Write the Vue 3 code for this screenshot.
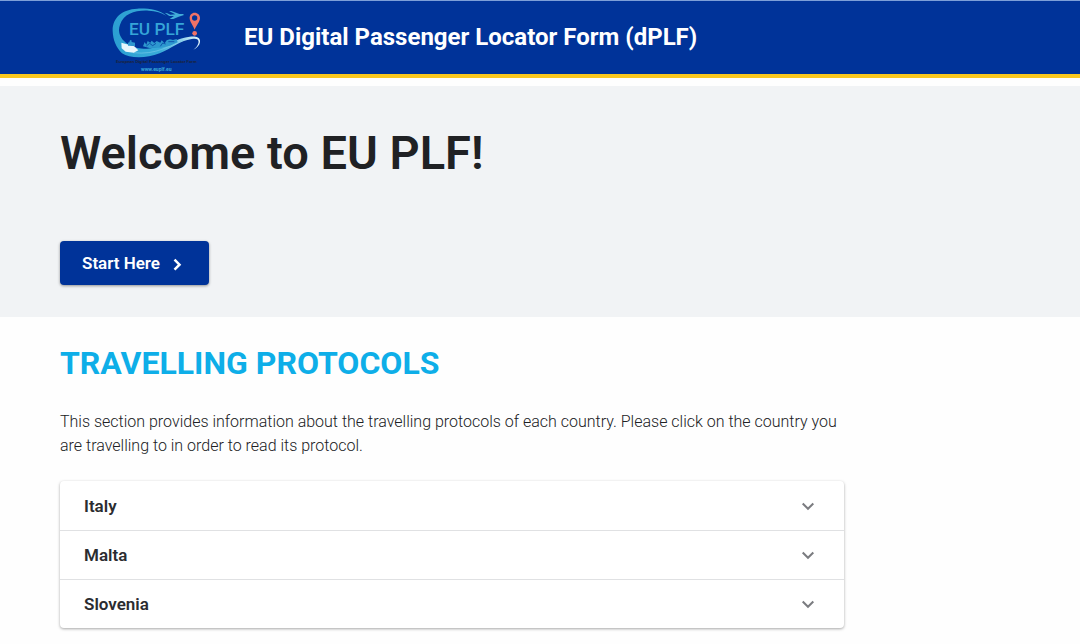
<template>
  <div class="page">
    <header class="header">
      <a href="#" class="logo" aria-label="EU PLF home">
        <svg viewBox="0 0 300 222" width="100" height="74" aria-hidden="true">
          <defs>
            <linearGradient id="swoosh" x1="0" y1="0" x2="1" y2="0">
              <stop offset="0" stop-color="#2b9fd2" />
              <stop offset="0.55" stop-color="#39abd9" />
              <stop offset="1" stop-color="#e4f6fc" />
            </linearGradient>
          </defs>
          <!-- swoosh -->
          <path
            fill="url(#swoosh)"
            d="M198 47C180 29 145 25 112 26C65 28 37 54 38 93C39 120 48 142 66 160C89 175 137 176 179 160C216 145 238 122 275 117C291 114 298 118 295 130C293 137 288 144 280 149C293 142 301 133 300 122C299 111 286 108 269 110C233 114 211 131 176 140C139 149 104 149 84 133C60 117 52 96 60 74C72 40 106 30 146 32C168 33 185 38 198 47Z"
          />
          <path fill="none" stroke="#77c9e8" stroke-width="2" d="M99 158C170 166 208 136 250 121" />
          <path fill="#e7f6fc" d="M64 128L103 139L115 151L101 158L77 155L65 145Z" />
          <!-- skyline -->
          <path
            fill="#2d98cf"
            d="M84 137V128L88 127L90 121L94 120L95 126L105 128V138ZM129 139L134 126L139 134L143 123L151 128L155 122L163 129L170 123L181 128L185 121L194 130L200 121L210 118L219 120L230 117L233 127L210 137L184 143L148 144Z"
          />
          <path stroke="#003399" stroke-width="2" fill="none" d="M139 138L149 130L158 137L168 130M181 139L188 129L197 132M205 125H223" />
          <!-- plane -->
          <path
            fill="#42add9"
            d="M194 38L202 40L211 44L226 43L207 33L214 33L238 42L249 42L252 45L236 50L220 57L209 57L222 48L208 48Z"
          />
          <text class="logo-name" x="87" y="106">EU PLF</text>
          <!-- pin -->
          <path
            fill="#ef7267"
            fill-rule="evenodd"
            d="M284 38C275 38 269 45 269 54C269 66 279 75 284 89C289 75 300 66 300 54C300 45 293 38 284 38ZM284 46A8 8 0 1 1 284 62A8 8 0 1 1 284 46Z"
          />
          <circle cx="284" cy="100" r="7" fill="#ef7267" />
          <text class="logo-caption" x="48" y="190">European Digital Passenger Locator Form</text>
          <text class="logo-url" x="123" y="214">www.euplf.eu</text>
        </svg>
      </a>
      <span class="header-title">EU Digital Passenger Locator Form (dPLF)</span>
    </header>

    <section class="hero">
      <h1 class="hero-title">Welcome to EU PLF!</h1>
      <button type="button" class="start-btn">
        <span>Start Here</span>
        <svg viewBox="0 0 24 24" width="20" height="20" aria-hidden="true">
          <path d="M9 8l6 6-6 6" fill="none" stroke="currentColor" stroke-width="3" />
        </svg>
      </button>
    </section>

    <main class="protocols">
      <h2 class="protocols-title">TRAVELLING PROTOCOLS</h2>
      <p class="protocols-text">
        This section provides information about the travelling protocols of each country. Please
        click on the country you are travelling to in order to read its protocol.
      </p>
      <div class="accordion">
        <button
          v-for="country in countries"
          :key="country"
          type="button"
          class="accordion-item"
          :aria-expanded="selected === country"
          @click="toggle(country)"
        >
          <span>{{ country }}</span>
          <svg
            viewBox="0 0 24 24"
            width="24"
            height="24"
            :class="['chevron', { 'chevron-open': selected === country }]"
            aria-hidden="true"
          >
            <path d="M6.7 9.5l5.3 5.3 5.3-5.3" fill="none" stroke="currentColor" stroke-width="2" />
          </svg>
        </button>
      </div>
    </main>
  </div>
</template>

<script setup>
import { ref } from 'vue'

const countries = ['Italy', 'Malta', 'Slovenia']
const selected = ref('')

const toggle = (country) => {
  selected.value = selected.value === country ? '' : country
}
</script>

<style>
body {
  margin: 0;
  background: #fefefe;
}
</style>

<style scoped>
.page {
  font-family: Roboto, "Liberation Sans", sans-serif;
  color: #202124;
}

.header {
  display: flex;
  align-items: center;
  gap: 44px;
  box-sizing: border-box;
  min-height: 78px;
  padding: 0 100px;
  background: #003399;
  border-bottom: 4px solid #fac81e;
  box-shadow: inset 0 1px 0 #7d9fd8;
}

.logo {
  display: flex;
}

.logo-name {
  font-size: 52px;
  font-weight: 500;
  fill: #35a5d8;
}

.logo-caption {
  font-size: 13px;
  font-weight: 700;
  fill: #1a2340;
}

.logo-url {
  font-size: 15px;
  font-weight: 700;
  fill: #3ba9da;
}

.header-title {
  font-size: 24px;
  line-height: 32px;
  font-weight: 700;
  color: #fff;
}

.hero {
  margin-top: 8px;
  padding: 32px 60px;
  background: #f1f3f5;
}

.hero-title {
  margin: 0 0 54px;
  font-size: 47px;
  line-height: 69px;
  font-weight: 600;
}

.start-btn {
  display: flex;
  align-items: center;
  gap: 7px;
  height: 44px;
  padding: 0 22px;
  border: none;
  border-radius: 4px;
  background: #003399;
  color: #fff;
  font-family: inherit;
  font-size: 17px;
  font-weight: 600;
  cursor: pointer;
  box-shadow: 0 1px 3px rgba(0, 0, 0, 0.4);
}

.start-btn:hover {
  background: #002b80;
}

.protocols {
  max-width: 784px;
  padding: 24px 60px;
}

.protocols-title {
  margin: 0 0 24px;
  font-size: 32px;
  line-height: 45px;
  font-weight: 700;
  color: #0eaee8;
}

.protocols-text {
  margin: 0 0 23px;
  font-size: 16px;
  line-height: 24px;
  font-weight: 300;
  color: #202124;
}

.accordion {
  border-radius: 4px;
  background: #fff;
  box-shadow: 0 1px 3px rgba(0, 0, 0, 0.35);
}

.accordion-item {
  display: flex;
  align-items: center;
  justify-content: space-between;
  width: 100%;
  height: 49px;
  padding: 0 24px;
  border: none;
  background: transparent;
  color: #2b2c30;
  font-family: inherit;
  font-size: 17px;
  font-weight: 600;
  text-align: left;
  cursor: pointer;
}

.accordion-item + .accordion-item {
  border-top: 1px solid #e0e1e3;
}

.chevron {
  color: #7b7c80;
  transition: transform 0.2s ease;
}

.chevron-open {
  transform: rotate(180deg);
}
</style>
